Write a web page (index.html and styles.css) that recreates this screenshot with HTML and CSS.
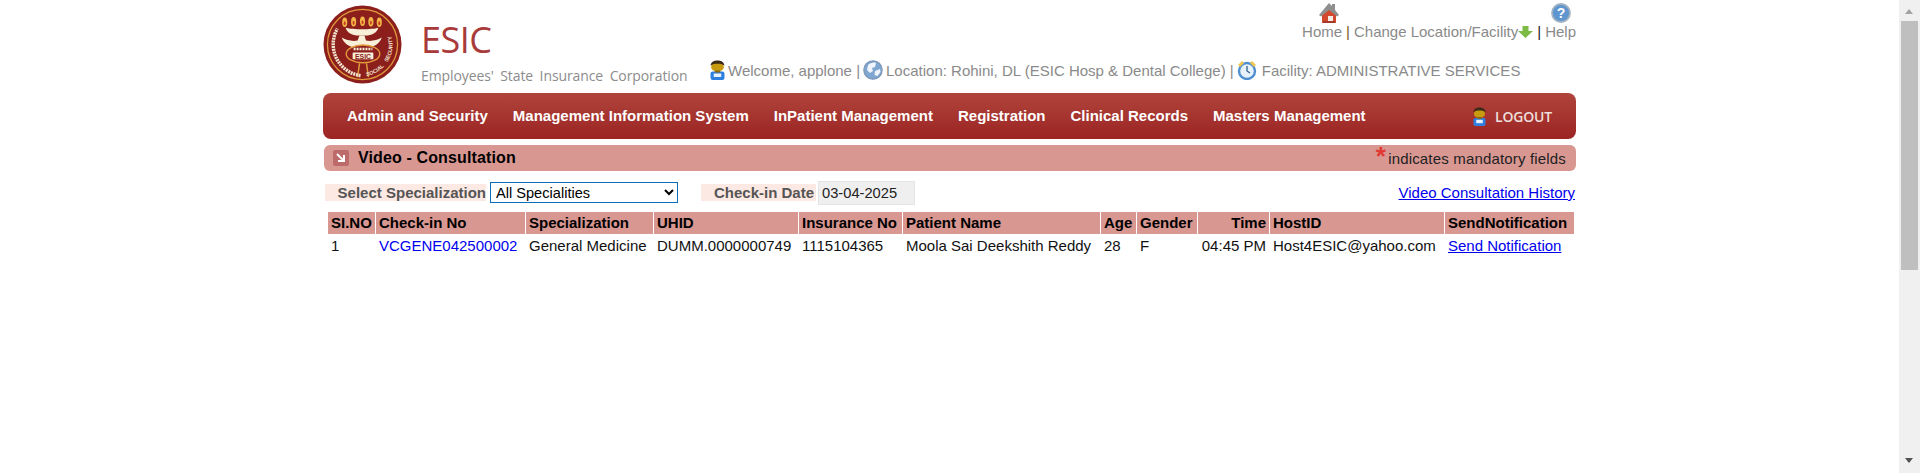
FILE: index.html
```html
<!DOCTYPE html>
<html lang="en">
<head>
<meta charset="utf-8">
<title>Video - Consultation</title>
<link rel="stylesheet" href="styles.css">
</head>
<body>
<svg class="defs" width="0" height="0" aria-hidden="true">
  <defs>
    <symbol id="person" viewBox="3 0 14 20" preserveAspectRatio="none">
      <rect x="3.500" y="11.500" width="13" height="8.500" rx="2" fill="#2f7fe0"/>
      <rect x="6.500" y="13.500" width="7" height="3.500" fill="#e8f2fc"/>
      <ellipse cx="10" cy="7" rx="6" ry="4.500" fill="#c89a10"/>
      <path d="M3.500 5.500C4 1.500 7 .5 10 .5s6 1 6.500 5c-2-1.500-4-1.800-6.500-1.800S5.500 4 3.500 5.500z" fill="#3a2a18"/>
      <rect x="7.500" y="10.500" width="5" height="2" fill="#8a6a10"/>
    </symbol>
    <path id="arc-low" d="M44 72A32 32 0 0 0 62 62"/>
    <path id="arc-high" d="M65 58A30 30 0 0 0 63 21"/>
  </defs>
</svg>
<div class="page">
  <main class="content">
    <header class="top">
      <svg class="logo" viewBox="0 0 80 80" aria-hidden="true">
        <circle cx="40" cy="40" r="39.500" fill="#8c1f1c"/>
        <circle cx="40" cy="40" r="35.500" fill="none" stroke="#e09a3c" stroke-width="1.300"/>
        <g fill="#f2b648">
          <ellipse cx="22" cy="17.500" rx="2.600" ry="4.800"/><ellipse cx="31" cy="17" rx="2.600" ry="4.800"/><ellipse cx="40" cy="16.500" rx="2.600" ry="4.800"/><ellipse cx="48.500" cy="17" rx="2.600" ry="4.800"/><ellipse cx="57" cy="17.500" rx="2.600" ry="4.800"/>
        </g>
        <g fill="#c8401f">
          <ellipse cx="22" cy="18.500" rx="1" ry="2"/><ellipse cx="31" cy="18" rx="1" ry="2"/><ellipse cx="40" cy="17.500" rx="1" ry="2"/><ellipse cx="48.500" cy="18" rx="1" ry="2"/><ellipse cx="57" cy="18.500" rx="1" ry="2"/>
        </g>
        <path d="M23 23c7 2 27 2 33 0-1 5-7 8-13 8h-7c-6 0-12-3-13-8z" fill="#f7efd8"/>
        <path d="M37 31h5l1.500 5c5 1 11 0 16-3-2 6-8 10-14 10H33c-6 0-12-4-14-10 5 3 11 4 16 3z" fill="#f7efd8"/>
        <ellipse cx="40.500" cy="49.500" rx="17" ry="9" fill="#8c1f1c" stroke="#e09a3c" stroke-width="1.400"/>
        <rect x="30" y="48" width="21" height="7" rx="1" fill="#f7efd8"/>
        <text class="logo-esic" x="40.500" y="54.500" text-anchor="middle">ESIC</text>
        <path d="M31 44.500h19" stroke="#f7efd8" stroke-width="2.500" stroke-dasharray="2 1"/>
        <path d="M37 59l-2 14M44 59l2 14" fill="none" stroke="#e09a3c" stroke-width="1.500"/>
        <path d="M38 71.500A32 32 0 0 1 14.500 24" fill="none" stroke="#f2e3cf" stroke-width="3.500" stroke-dasharray="2 .8"/>
        <text class="logo-ring"><textPath href="#arc-low">SOCIAL</textPath></text>
        <text class="logo-ring"><textPath href="#arc-high">SECURITY</textPath></text>
      </svg>
      <div class="brand">
        <div class="brand-name">ESIC</div>
        <div class="brand-sub">Employees' State Insurance Corporation</div>
      </div>
      <div class="top-right">
        <nav class="quick">
          <span class="quick-item">
            <svg class="ico-home" viewBox="0 0 20 20" aria-hidden="true">
              <path d="M3 20V10l7-6 7 6v10z" fill="#d2492e"/>
              <path d="M0 12 10 0l3 3V1h3v6l4 5-2 1.500L10 7 2 13.500z" fill="#8f8f8f"/>
              <rect x="9" y="13" width="5" height="5" fill="#f4ece6"/>
              <rect x="4" y="18" width="12" height="2" fill="#a73a24"/>
            </svg>
            <a class="qlink">Home</a>
          </span>
          <span class="sep">|</span>
          <a class="qlink">Change Location/Facility</a><svg class="ico-arrow" viewBox="0 0 15 12" aria-hidden="true"><path d="M4.500 0h6v5H15l-7.500 7L0 5h4.500z" fill="#7dbb45"/></svg>
          <span class="sep sep-dark">|</span>
          <span class="quick-item quick-help">
            <svg class="ico-help" viewBox="0 0 20 20" aria-hidden="true"><circle cx="10" cy="10" r="9" fill="#5f96cf" stroke="#a3b2c2" stroke-width="1.800"/><text x="10" y="15" text-anchor="middle" class="help-q">?</text></svg>
            <a class="qlink">Help</a>
          </span>
        </nav>
        <div class="status">
          <svg class="ico-person" aria-hidden="true"><use href="#person"/></svg>
          <span>Welcome, applone |</span>
          <svg class="ico-globe" viewBox="0 0 20 20" aria-hidden="true"><circle cx="10" cy="10" r="9.200" fill="#7fa6d0" stroke="#7f97b5" stroke-width="1.200"/><path d="M5 5c2-2 6-3 8-2l-1 4-3 1 1 3-3 2-3-3zM12 11l5-2 .5 3-3 4-3-1z" fill="#eef4fa"/></svg>
          <span>Location: Rohini, DL (ESIC Hosp &amp; Dental College) |</span>
          <svg class="ico-clock" viewBox="0 0 20 20" aria-hidden="true"><circle cx="10" cy="11" r="8" fill="#e8f2fb" stroke="#4f8fd0" stroke-width="2.400"/><path d="M10 6v5l3 2" fill="none" stroke="#35608f" stroke-width="1.300"/><path d="M1 5l4-4 2 2-4 4zM19 5l-4-4-2 2 4 4z" fill="#f0c550"/></svg>
          <span>Facility: ADMINISTRATIVE SERVICES</span>
        </div>
      </div>
    </header>

    <nav class="menu">
      <a class="menu-item">Admin and Security</a>
      <a class="menu-item">Management Information System</a>
      <a class="menu-item">InPatient Management</a>
      <a class="menu-item">Registration</a>
      <a class="menu-item">Clinical Records</a>
      <a class="menu-item">Masters Management</a>
      <a class="logout">
        <svg class="ico-person-lg" aria-hidden="true"><use href="#person"/></svg>
        <span>LOGOUT</span>
      </a>
    </nav>

    <section class="subhead">
      <svg class="ico-corner" viewBox="0 0 16 16" aria-hidden="true"><rect width="16" height="16" rx="2" fill="#bd6b6a"/><path d="M4 4l6 6M11 5v6H5" fill="none" stroke="#fff" stroke-width="2"/></svg>
      <h1 class="title">Video - Consultation</h1>
      <div class="mandatory"><span class="star">*</span><span>indicates mandatory fields</span></div>
    </section>

    <form class="filters">
      <label class="flabel flabel-spec">Select Specialization</label>
      <select class="fselect"><option>All Specialities</option></select>
      <label class="flabel flabel-date">Check-in Date</label>
      <input class="finput" value="03-04-2025" readonly>
      <a class="history" href="#">Video Consultation History</a>
    </form>

    <table class="grid">
      <colgroup>
        <col class="c1"><col class="c2"><col class="c3"><col class="c4"><col class="c5"><col class="c6"><col class="c7"><col class="c8"><col class="c9"><col class="c10"><col class="c11">
      </colgroup>
      <thead>
        <tr>
          <th>SI.NO</th><th>Check-in No</th><th>Specialization</th><th>UHID</th><th>Insurance No</th><th>Patient Name</th><th>Age</th><th>Gender</th><th class="right">Time</th><th>HostID</th><th>SendNotification</th>
        </tr>
      </thead>
      <tbody>
        <tr>
          <td>1</td><td><a class="plain-link">VCGENE042500002</a></td><td>General Medicine</td><td>DUMM.0000000749</td><td>1115104365</td><td>Moola Sai Deekshith Reddy</td><td>28</td><td>F</td><td class="right">04:45 PM</td><td>Host4ESIC@yahoo.com</td><td><a class="ul-link" href="#">Send Notification</a></td>
        </tr>
      </tbody>
    </table>
  </main>

  <div class="scrollbar" aria-hidden="true">
    <div class="sb-up"></div>
    <div class="sb-track"><div class="sb-thumb"></div></div>
    <div class="sb-down"></div>
  </div>
</div>
</body>
</html>
```

FILE: styles.css
```css
* { box-sizing: border-box; }
html, body { margin: 0; height: 473px; overflow: hidden; background: #fff; }
body { font-family: "Liberation Sans", Arial, sans-serif; font-size: 15px; color: #000; }
.defs { position: absolute; }
.page { display: flex; height: 473px; }
.content { flex: 1; min-width: 0; padding: 0 323px; }

.top { display: flex; height: 93px; }
.logo { width: 79px; height: 79px; margin-top: 5px; flex: none; }
.logo-esic { font: bold 7px "Liberation Sans", sans-serif; fill: #8c1f1c; }
.logo-ring { font: bold 5.500px "Liberation Sans", sans-serif; fill: #f2e3cf; }
.brand { margin-left: 19px; flex: none; width: 269px; }
.brand-name { font-family: "Open Sans", sans-serif; font-size: 36px; line-height: 40px; color: #a83a3a; margin-top: 20px; letter-spacing: -0.5px; }
.brand-sub { font-family: "Open Sans", sans-serif; font-size: 14px; line-height: 18px; color: #8c8c8c; margin-top: 7px; word-spacing: 3px; white-space: nowrap; letter-spacing: -0.1px; }

.top-right { flex: 1; min-width: 0; display: flex; flex-direction: column; color: #8a8a8a; }
.quick { display: flex; justify-content: flex-end; align-items: flex-end; height: 40px; line-height: 17px; }
.quick-item { display: flex; flex-direction: column; align-items: center; }
.qlink { color: #8a8a8a; }
.ico-home { width: 20px; height: 20px; margin-left: 13px; }
.ico-help { width: 20px; height: 20px; }
.help-q { font: bold 14px "Liberation Sans", sans-serif; fill: #fff; }
.sep { margin: 0 4px; color: #7a5a20; }
.sep-dark { color: #222; }
.ico-arrow { width: 15px; height: 12px; margin-bottom: 2px; }
.status { display: flex; align-items: center; height: 22px; margin-top: 19px; gap: 3px; white-space: nowrap; margin-left: 20px; }
.ico-person { width: 15px; height: 20px; }
.ico-globe { width: 20px; height: 20px; }
.ico-clock { width: 20px; height: 20px; margin-right: 2px; }

.menu { display: flex; align-items: center; height: 46px; border-radius: 8px; padding: 0 24px; background: linear-gradient(#b0443c, #9b2422); gap: 25px; }
.menu-item { color: #fff; font-weight: bold; font-size: 15px; white-space: nowrap; margin-bottom: 2px; }
.logout { margin-left: auto; display: flex; align-items: center; gap: 9px; color: #eedfdc; font-family: "Open Sans", sans-serif; font-weight: 600; font-size: 14px; letter-spacing: -0.2px; }
.ico-person-lg { width: 13px; height: 19px; }

.subhead { display: flex; align-items: center; height: 26px; margin: 6px 0 0 1px; padding: 0 10px 0 9px; border-radius: 6px; background: #d99792; }
.ico-corner { width: 16px; height: 16px; flex: none; }
.title { margin: 0 0 0 9px; font-size: 16px; font-weight: bold; line-height: 20px; letter-spacing: 0.13px; }
.mandatory { margin-left: auto; display: flex; align-items: center; color: #222; font-size: 15px; letter-spacing: 0.17px; }
.star { color: #e03a35; font-size: 26px; font-weight: bold; line-height: 14px; height: 14px; margin: 0 2px 4px 0; }

.filters { display: flex; align-items: center; height: 21px; margin: 11px 0 0 2px; }
.flabel { height: 17px; line-height: 17px; background: #fde9e3; color: #555; font-weight: bold; text-align: right; }
.flabel-spec { width: 161px; padding-right: 0; }
.flabel-date { width: 115px; margin-left: 23px; padding-right: 2px; }
.fselect { width: 188px; height: 21px; margin-left: 4px; border: 1px solid #0a6fb8; background: #fff; font: 14.6px "Liberation Sans", sans-serif; color: #000; padding: 0 0 0 1px; }
.finput { width: 97px; height: 24px; margin-left: 2px; border: 1px solid #e4e4e4; background: #efefef; font: 14.7px "Liberation Sans", sans-serif; color: #222; padding: 0 3px; }
.history { margin-left: auto; margin-right: 1px; color: #00e; }

.grid { margin: 8px 0 0 4px; width: 1248px; border-collapse: separate; border-spacing: 1px; table-layout: fixed; }
.grid th { background: #d99792; height: 22px; padding: 0 3px 1px; text-align: left; font-weight: bold; white-space: nowrap; }
.grid td { height: 21px; padding: 0 3px; white-space: nowrap; color: #111; }
.grid .right { text-align: right; }
.plain-link { color: #00e; }
.ul-link { color: #00e; }
.c1 { width: 47px; } .c2 { width: 149px; } .c3 { width: 127px; } .c4 { width: 144px; } .c5 { width: 103px; } .c6 { width: 197px; } .c7 { width: 35px; } .c8 { width: 60px; } .c9 { width: 71px; } .c10 { width: 174px; } .c11 { width: auto; }

.scrollbar { width: 21px; flex: none; background: #f0f0f0; display: flex; flex-direction: column; align-items: center; }
.sb-up { height: 21px; width: 17px; position: relative; }
.sb-up::after { content: ""; position: absolute; left: 4px; top: 9px; border: 4.5px solid transparent; border-top: 0; border-bottom: 5px solid #a3a3a3; }
.sb-track { flex: 1; width: 17px; }
.sb-thumb { height: 249px; background: #bfbfbf; }
.sb-down { height: 21px; width: 17px; position: relative; }
.sb-down::after { content: ""; position: absolute; left: 4px; top: 6px; border: 4.5px solid transparent; border-bottom: 0; border-top: 5px solid #505050; }
```
